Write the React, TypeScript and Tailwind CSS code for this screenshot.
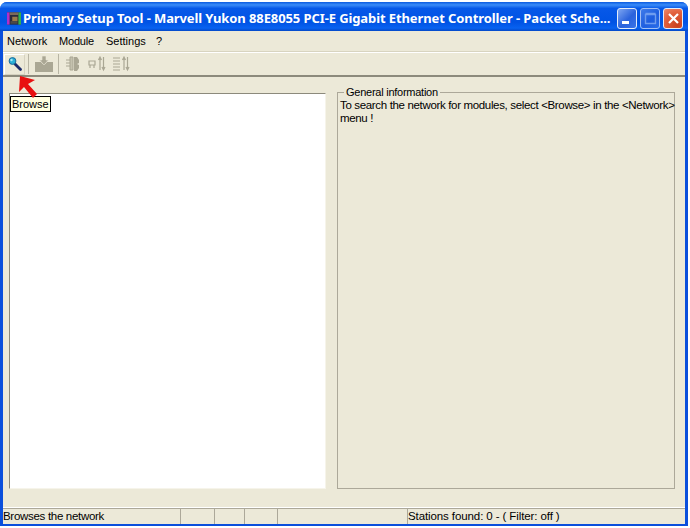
import React from "react";

const Sans = "font-['Liberation_Sans',Arial,sans-serif]";

function Caption({ kind }: { kind: "min" | "max" | "close" }) {
  const bg =
    kind === "close"
      ? "bg-[radial-gradient(circle_at_75%_85%,#c9401f,#e2603c_60%,#ec8a6c)]"
      : kind === "min"
        ? "bg-[linear-gradient(135deg,#7ea6f2,#2a62dc_55%,#3a74e8)]"
        : "bg-[linear-gradient(135deg,#5a8cea,#2a62dc_55%,#3a74e8)]";
  return (
    <div className={`w-[20px] h-[21px] rounded-[3px] border border-[#e4ecfa] flex items-center justify-center ${bg} ${kind === "max" ? "opacity-70" : ""}`}>
      <svg width="15" height="15" viewBox="0 0 15 15">
        {kind === "min" && <rect x="2" y="10" width="7" height="3" fill="#fff" />}
        {kind === "max" && <path d="M2.5 3.5h10v9h-10z M2.5 2.5h10" fill="none" stroke="#9dbcf3" strokeWidth="1.4" />}
        {kind === "close" && <path d="M3 3l9 9M12 3l-9 9" stroke="#fff" strokeWidth="2.2" />}
      </svg>
    </div>
  );
}

function StatusCell({ className, children }: { className: string; children?: React.ReactNode }) {
  return (
    <div className={`h-[16px] border-t border-[#aca899] text-[11.5px] leading-[14px] text-black whitespace-nowrap overflow-hidden ${className}`}>
      {children}
    </div>
  );
}

export default function App() {
  return (
    <div className={`w-[690px] h-[528px] bg-white overflow-hidden pt-[2px] ${Sans}`}>
      <div className="w-[688px] h-[524px] rounded-t-[7px] bg-[#0a4fdc] flex flex-col px-[3px] pb-[2px] overflow-hidden">
        <div className="-mx-[3px] h-[29px] shrink-0 flex items-center pl-[7px] pr-[5px] bg-[linear-gradient(180deg,#0a5ae0_0%,#3b8cf8_10%,#0758e8_22%,#0053e4_70%,#0862f0_90%,#0348c8_100%)]">
          <svg width="14" height="15" viewBox="0 0 16 16" className="shrink-0 mt-[4px]">
            <rect x="0" y="1" width="16" height="14" fill="#2a2a3a" />
            <rect x="0" y="1" width="3" height="14" fill="#b030c8" />
            <rect x="13" y="1" width="3" height="14" fill="#30b050" />
            <rect x="3" y="1" width="10" height="3" fill="#7a6a5a" />
            <rect x="6" y="6" width="6" height="5" fill="#9a7a4a" />
            <rect x="4" y="11" width="8" height="3" fill="#4a4a4a" />
          </svg>
          <div className="ml-[2px] mt-[3px] w-[590px] text-white font-['Noto_Sans',sans-serif] font-bold text-[13px] tracking-[-0.1px] leading-[26px] whitespace-nowrap">
            Primary Setup Tool - Marvell Yukon 88E8055 PCI-E Gigabit Ethernet Controller - Packet Sche...
          </div>
          <div className="ml-auto flex gap-[3px] pt-[4px]">
            <Caption kind="min" />
            <Caption kind="max" />
            <Caption kind="close" />
          </div>
        </div>

        <div className="flex-1 min-h-0 flex flex-col bg-[#ece9d8] relative">
          <div className="h-[21px] shrink-0 flex items-center pl-[4px] pt-[1px] text-[11px] text-black border-b border-[#d8d4c0]">
            <span className="w-[52px]">Network</span>
            <span className="w-[47px] tracking-[-0.2px]">Module</span>
            <span className="w-[50px]">Settings</span>
            <span>?</span>
          </div>

          <div className="h-[25px] shrink-0 flex items-center pl-[1px] border-t border-white border-b-2 border-b-[#8c8a7c]">
            <div className="w-[21px] h-[21px] flex items-center justify-center border-r border-b border-[#d6d2c0] border-t border-l border-t-white border-l-white">
              <svg width="16" height="16" viewBox="0 0 16 16">
                <path d="M8 8l5.5 5.5" stroke="#1a2a6a" strokeWidth="2.8" strokeLinecap="round" />
                <circle cx="5.5" cy="5" r="3.4" fill="#2ab0d8" stroke="#1c6a9a" strokeWidth="1" />
                <circle cx="4.5" cy="4" r="1.2" fill="#a8e8f4" />
              </svg>
            </div>
            <div className="w-px h-[20px] bg-[#b8b5a4] ml-[3px]" />
            <div className="w-[20px] h-[22px] ml-[5px] flex items-center justify-center">
              <svg width="20" height="18" viewBox="0 0 20 18">
                <path d="M1 7h6l2 2h2l2-2h6v10H1z" fill="#aaa794" />
                <path d="M8 1h4v4h2.5L10 10 5.5 5H8z" fill="#aaa794" stroke="#ece9d8" strokeWidth="0.6" />
              </svg>
            </div>
            <div className="w-px h-[20px] bg-[#b8b5a4] ml-[4px]" />
            <div className="ml-[5px] flex items-center gap-[6px]">
              <svg width="18" height="18" viewBox="0 0 18 18">
                <path d="M6 2h3v13H6zM2 5h4M2 8h4M2 11h4" fill="#c4c1ae" stroke="#aaa794" />
                <path d="M10 2h3l2 3v3l-2 1 2 1v3l-2 3h-3z" fill="#aaa794" />
              </svg>
              <svg width="18" height="18" viewBox="0 0 18 18">
                <path d="M1 6h6v4H1zM2 10v3M6 10v3" fill="none" stroke="#aaa794" strokeWidth="1.2" />
                <path d="M12 2v13M15.5 2v13M10.5 5L12 2l1.5 3M14 12l1.5 3 1.5-3" fill="none" stroke="#aaa794" strokeWidth="1.2" />
              </svg>
              <svg width="18" height="18" viewBox="0 0 18 18">
                <path d="M1 3h7M1 6h7M1 9h7M1 12h7M1 15h7" stroke="#aaa794" strokeWidth="1.2" />
                <path d="M12 2v13M15.5 2v13M10.5 5L12 2l1.5 3M14 12l1.5 3 1.5-3" fill="none" stroke="#aaa794" strokeWidth="1.2" />
              </svg>
            </div>
          </div>

          <div className="flex-1 min-h-0 flex pl-[6px] pr-[10px] pt-[12px] pb-[18px]">
            <div className="w-[317px] mt-[4px] bg-white border-t border-l border-[#8c8a7c] border-r border-b border-r-[#f6f4ea] border-b-[#f6f4ea] shrink-0" />
            <fieldset className="ml-[11px] flex-1 border border-[#aca899] pl-[2px] pr-0 pt-0 -mt-[3px] min-w-0">
              <legend className="ml-[4px] px-[2px] text-[11px] tracking-[-0.25px] leading-[12px] text-black">General information</legend>
              <p className="mt-[1px] text-[11.5px] tracking-[-0.34px] leading-[13px] text-black whitespace-nowrap">
                To search the network for modules, select &lt;Browse&gt; in the &lt;Network&gt;
                <br />
                menu !
              </p>
            </fieldset>
          </div>

          <div className="h-[17px] shrink-0 flex border-t border-white">
            <StatusCell className="w-[177px] tracking-[-0.3px]">Browses the network</StatusCell>
            <StatusCell className="w-[34px] border-l" />
            <StatusCell className="w-[30px] border-l" />
            <StatusCell className="w-[33px] border-l" />
            <StatusCell className="w-[130px] border-l" />
            <StatusCell className="flex-1 border-l tracking-[-0.1px]">Stations found: 0 - ( Filter: off )</StatusCell>
          </div>

          <div className="absolute left-[7px] top-[65px] px-[1px] w-[41px] h-[16px] bg-[#ffffe1] border border-black text-[11px] leading-[14px] text-black">
            Browse
          </div>
          <svg className="absolute left-[12px] top-[42px]" width="24" height="26" viewBox="0 0 24 26">
            <path d="M5 3L4 19l5-5 9 11 4-4-9-10 7-4z" fill="#e81010" />
          </svg>
        </div>
      </div>
    </div>
  );
}
